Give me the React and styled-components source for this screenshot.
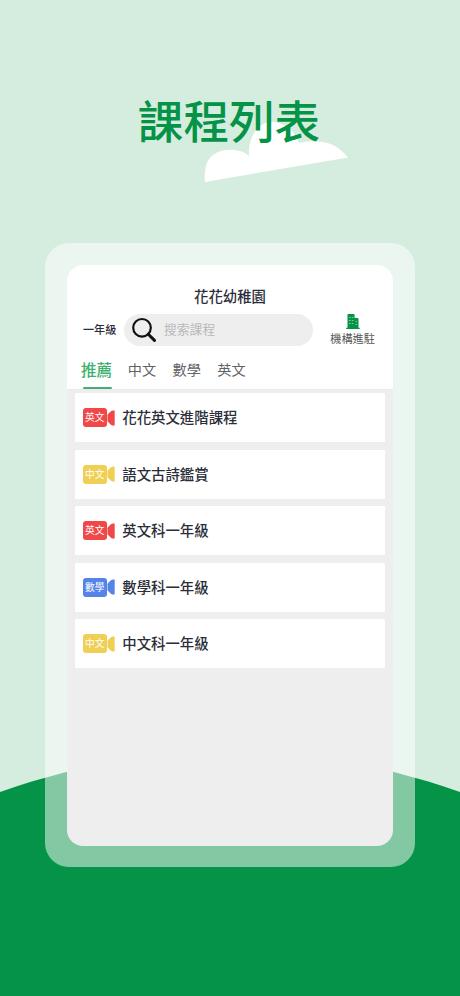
import React from "react";
import styled, { createGlobalStyle } from "styled-components";

const Global = createGlobalStyle`
  * { box-sizing: border-box; }
  body { margin: 0; font-family: "Noto Sans CJK TC", "Noto Sans", sans-serif; }
`;

const Page = styled.main`
  position: relative;
  width: 460px;
  height: 996px;
  overflow: hidden;
  background: #d5eddf;
  display: flex;
  flex-direction: column;
  align-items: center;
`;

const Hill = styled.div`
  position: absolute;
  left: 50%;
  top: 752px;
  width: 1360px;
  height: 1360px;
  margin-left: -680px;
  border-radius: 50%;
  background: #059347;
`;

const CloudShape = styled.svg`
  position: absolute;
  left: 204px;
  top: 120px;
  width: 146px;
  height: 64px;
`;

const Headline = styled.h1`
  position: relative;
  margin: 85px 0 0;
  padding-right: 2px;
  height: 68px;
  line-height: 68px;
  font-size: 45.6px;
  font-weight: 500;
  color: #059347;
  white-space: nowrap;
`;

const Frame = styled.section`
  position: relative;
  width: 370px;
  height: 624px;
  margin-top: 90px;
  padding: 22px;
  border-radius: 24px;
  background: rgba(255, 255, 255, 0.5);
`;

const Screen = styled.div`
  height: 580.5px;
  border-radius: 16px;
  overflow: hidden;
  background: #eee;
  display: flex;
  flex-direction: column;
`;

const Header = styled.header`
  height: 124px;
  background: #fff;
  box-shadow: 0 1px 1px rgba(0, 0, 0, 0.02);
  display: flex;
  flex-direction: column;
`;

const School = styled.h2`
  margin: 20px 0 0;
  font-size: 14.4px;
  line-height: 22px;
  font-weight: 500;
  text-align: center;
  color: #2b2e39;
`;

const SearchRow = styled.div`
  display: flex;
  align-items: center;
  height: 32px;
  margin-top: 7px;
  padding: 0 18px 0 16px;
`;

const Grade = styled.span`
  width: 41px;
  padding-bottom: 2px;
  font-size: 11.1px;
  line-height: 16px;
  font-weight: 500;
  color: #2b2e39;
  white-space: nowrap;
`;

const SearchBox = styled.div`
  display: flex;
  align-items: center;
  gap: 7px;
  width: 188.5px;
  height: 32px;
  padding: 0 0 0 8px;
  border-radius: 16px;
  background: #eee;
`;

const Placeholder = styled.span`
  padding-bottom: 2px;
  font-size: 12.8px;
  line-height: 20px;
  color: #b9b9b9;
`;

const Join = styled.div`
  display: flex;
  flex-direction: column;
  align-items: center;
  margin-left: auto;
  font-size: 11.2px;
  line-height: 16px;
  color: #555;
  svg { display: block; margin-bottom: 1px; }
`;

const Tabs = styled.nav`
  display: flex;
  gap: 16.4px;
  height: 43px;
  padding-left: 14px;
`;

const Tab = styled.span`
  position: relative;
  height: 43px;
  line-height: 46px;
  font-size: ${(p) => (p.$active ? 15.6 : 14.2)}px;
  margin-right: ${(p) => (p.$active ? -0.8 : 0)}px;
  font-weight: ${(p) => (p.$active ? 500 : 400)};
  color: ${(p) => (p.$active ? "#3db270" : "#606266")};
  &::after {
    content: "";
    display: ${(p) => (p.$active ? "block" : "none")};
    position: absolute;
    left: 1.5px;
    right: 0.5px;
    bottom: 0;
    height: 2.5px;
    border-radius: 1px;
    background: #45ac78;
  }
`;

const List = styled.ul`
  list-style: none;
  margin: 0;
  padding: 4px 8px 0;
  display: flex;
  flex-direction: column;
  gap: 7.5px;
`;

const Course = styled.li`
  display: flex;
  align-items: center;
  height: 49px;
  padding-left: 8px;
  border-radius: 1px;
  background: #fff;
`;

const CourseName = styled.span`
  margin-left: 7.3px;
  padding-bottom: 1px;
  font-size: 14.4px;
  line-height: 20px;
  font-weight: 500;
  color: #2b2e39;
`;

const Badge = styled.span`
  display: flex;
  align-items: center;
  gap: 0.5px;
  color: ${(p) => p.$color};
`;

const BadgeLabel = styled.span`
  width: 23.5px;
  height: 19px;
  border-radius: 3px;
  background: ${(p) => p.$color};
  color: #fff;
  font-size: 9.7px;
  font-weight: 400;
  line-height: 19px;
  text-align: center;
`;

const RED = "#f04848";
const YELLOW = "#efd055";
const BLUE = "#5484e8";

const courses = [
  { tag: "英文", color: RED, name: "花花英文進階課程" },
  { tag: "中文", color: YELLOW, name: "語文古詩鑑賞" },
  { tag: "英文", color: RED, name: "英文科一年級" },
  { tag: "數學", color: BLUE, name: "數學科一年級" },
  { tag: "中文", color: YELLOW, name: "中文科一年級" },
];

const tabs = ["推薦", "中文", "數學", "英文"];

const Cloud = () => (
  <CloudShape viewBox="204 120 146 64" aria-hidden="true">
    <path
      fill="#fff"
      d="M205 182C204 170 206 160 213 155C222 148 240 148 249 156C248 140 255 125 269 122C282 121 295 129 299 143C313 139 331 142 338 148C342 151 345 154 348 157.5Z"
    />
  </CloudShape>
);

const SearchIcon = () => (
  <svg width="25" height="26" viewBox="0 0 25 26" fill="none" stroke="#111">
    <circle cx="10" cy="10.8" r="8.8" strokeWidth="2.2" />
    <path d="M16.3 17.2L22.5 23.4" strokeWidth="3" strokeLinecap="round" />
  </svg>
);

const BuildingIcon = () => (
  <svg width="14" height="15" viewBox="0 0 14 15">
    <path fill="#059347" d="M1.5 .5Q1.5 0 2 0H8Q8.6 0 8.6 .6V4H11.5Q12.5 4 12.5 5V13.7H13.7V15H.2V13.7H1.5Z" />
    <path
      stroke="#fff"
      strokeOpacity=".5"
      d="M3 3.5h1.7M5.8 3.5h1.7M3 6.5h1.7M5.8 6.5h1.7M3 9.5h1.7M5.8 9.5h1.7M9.6 7.5h1.5M9.6 10.5h1.5"
    />
  </svg>
);

export default function App() {
  return (
    <Page>
      <Global />
      <Hill />
      <Cloud />
      <Headline>課程列表</Headline>
      <Frame>
        <Screen>
          <Header>
            <School>花花幼稚園</School>
            <SearchRow>
              <Grade>一年級</Grade>
              <SearchBox>
                <SearchIcon />
                <Placeholder>搜索課程</Placeholder>
              </SearchBox>
              <Join>
                <BuildingIcon />
                機構進駐
              </Join>
            </SearchRow>
            <Tabs>
              {tabs.map((t, i) => (
                <Tab key={t} $active={i === 0}>{t}</Tab>
              ))}
            </Tabs>
          </Header>
          <List>
            {courses.map((c) => (
              <Course key={c.name}>
                <Badge $color={c.color}>
                  <BadgeLabel $color={c.color}>{c.tag}</BadgeLabel>
                  <svg width="8" height="16" viewBox="0 0 8 16" fill="currentColor">
                    <path d="M.5 5.2Q.5 4.5 1.1 3.9L4.2 1.1Q5 .5 6 .5H7.7V15.5H6Q5 15.5 4.2 14.9L1.1 12.1Q.5 11.5 .5 10.8Z" />
                  </svg>
                </Badge>
                <CourseName>{c.name}</CourseName>
              </Course>
            ))}
          </List>
        </Screen>
      </Frame>
    </Page>
  );
}
